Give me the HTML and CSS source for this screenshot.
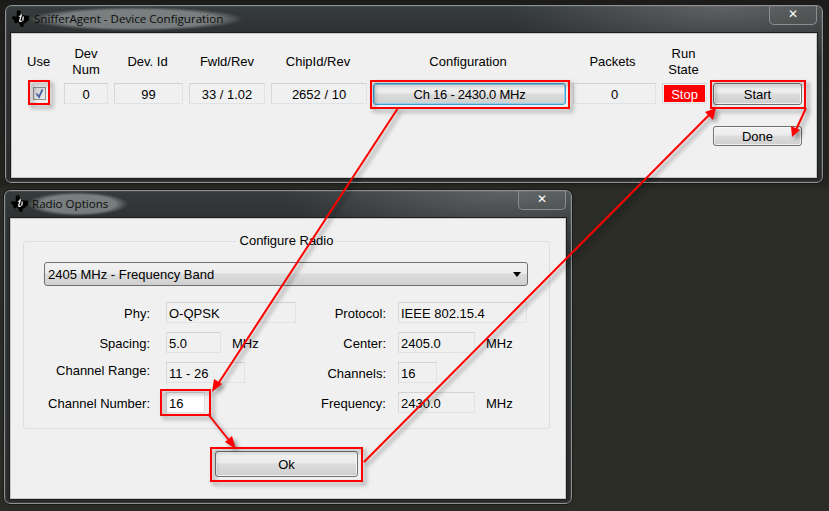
FILE: index.html
```html
<!DOCTYPE html>
<html lang="en">
<head>
<meta charset="utf-8">
<title>SnifferAgent</title>
<link rel="stylesheet" href="styles.css">
</head>
<body>
<svg width="0" height="0" class="defs">
  <symbol id="ti" viewBox="0 0 16 16">
    <path d="M4.500 .5H8V4l3.500 1.200L16 5.500V9.500l-3 2.500-2 1-.5 3-2.500-.5-1.500-3.500-1.500-.5-1 1.500-1.500-1-1-3L0 7.500V6h4.500z" fill="#000"/>
    <path d="M8.500 3.500c1 .5 1 1.500.5 2.500l-1 3c-.4 1.200.5 1.500 1.400 1l-.2 1c-1.500.8-3 .2-2.400-1.800l.9-2.800H6.300L6.500 5.500h1.200z" fill="#fff"/>
    <path d="M10 6h1.200l-.5 4H9.500z" fill="#fff"/>
  </symbol>
</svg>

<section class="win win-device">
  <header class="titlebar">
    <svg class="logo"><use href="#ti"/></svg>
    <span class="title">SnifferAgent - Device Configuration</span>
  </header>
  <button class="close">✕</button>
  <div class="client">
    <div class="device-grid">
      <div class="head">Use</div>
      <div class="head">Dev<br>Num</div>
      <div class="head head-nudge">Dev. Id</div>
      <div class="head">Fwld/Rev</div>
      <div class="head head-nudge">ChipId/Rev</div>
      <div class="head head-shift">Configuration</div>
      <div class="head head-shift">Packets</div>
      <div class="head head-nudge">Run<br>State</div>
      <div></div>

      <div class="check-cell"><span class="check"><svg width="11" height="11" viewBox="0 0 11 11"><path d="M2.500 5.500 5 9l3.500-7.500" fill="none" stroke="#4a5fa5" stroke-width="1.800"/></svg></span></div>
      <div class="field center">0</div>
      <div class="field center">99</div>
      <div class="field center">33 / 1.02</div>
      <div class="field center">2652 / 10</div>
      <button class="btn btn-focus">Ch 16 - 2430.0 MHz</button>
      <div class="field center">0</div>
      <div class="field state"><span class="stop">Stop</span></div>
      <button class="btn">Start</button>

      <button class="btn btn-done">Done</button>
    </div>
  </div>
</section>

<section class="win win-radio">
  <header class="titlebar">
    <svg class="logo"><use href="#ti"/></svg>
    <span class="title title-short">Radio Options</span>
  </header>
  <button class="close">✕</button>
  <div class="client client-radio">
    <fieldset class="group">
      <legend>Configure Radio</legend>
      <div class="combo"><span>2405 MHz - Frequency Band</span><i class="caret"></i></div>
      <div class="form">
        <div class="pane pane-left">
          <div class="row"><label>Phy:</label><div class="field w-130">O-QPSK</div></div>
          <div class="row"><label>Spacing:</label><div class="field w-55">5.0</div><span class="unit">MHz</span></div>
          <div class="row"><label class="raised">Channel Range:</label><div class="field w-79">11 - 26</div></div>
          <div class="row"><label>Channel Number:</label><div class="field field-edit w-39">16</div></div>
        </div>
        <div class="pane pane-right">
          <div class="row"><label>Protocol:</label><div class="field w-129">IEEE 802.15.4</div></div>
          <div class="row"><label>Center:</label><div class="field w-77">2405.0</div><span class="unit">MHz</span></div>
          <div class="row"><label>Channels:</label><div class="field w-39">16</div></div>
          <div class="row"><label>Frequency:</label><div class="field w-77">2430.0</div><span class="unit">MHz</span></div>
        </div>
      </div>
    </fieldset>
    <button class="btn btn-ok">Ok</button>
  </div>
</section>

<svg class="notes" width="829" height="511" viewBox="0 0 829 511" fill="none">
  <g class="note-group">
    <g stroke="#fe0000" stroke-width="2">
      <rect x="29" y="81" width="20" height="23"/>
      <rect x="371" y="81" width="198" height="27"/>
      <rect x="711" y="81" width="94" height="27"/>
      <rect x="161" y="390" width="49" height="25"/>
      <rect x="211" y="448" width="151" height="33"/>
      <path d="M398 108 216 387"/>
      <path d="M208 414 232 444"/>
      <path d="M364 462 711 113"/>
      <path d="M806 108 795 132"/>
    </g>
    <g fill="#fe0000">
      <path d="M212 392 214 379 222 384z"/>
      <path d="M236 449 225 442 232 436z"/>
      <path d="M716 108 713 120 705 112z"/>
      <path d="M792 137 791 126 800 130z"/>
    </g>
  </g>
</svg>
</body>
</html>
```
FILE: styles.css
```css
* { box-sizing: border-box; }
html, body { margin: 0; height: 100%; }
body {
  position: relative;
  width: 829px;
  height: 511px;
  overflow: hidden;
  background: #2a2b25;
  background-image: linear-gradient(180deg, #1b1b19 0, #1d1d1b 6px, #24241f 185px, #2b2c26 190px);
  font-family: "Liberation Sans", Arial, sans-serif;
  font-size: 13px;
  color: #000;
}
.defs { position: absolute; }

.win {
  position: absolute;
  border: 1px solid #8d9191;
  border-radius: 6px;
  outline: 1px solid #1a1a1a;
  background:
    radial-gradient(220px 60px at 88% 0, rgba(255,255,255,.2), transparent),
    linear-gradient(180deg, #363b3b 0, #2f3333 24px, #2a2c2c 100%);
  box-shadow: inset 0 0 0 1px rgba(255,255,255,.08);
}
.win-device { left: 5px; top: 5px; width: 818px; height: 178px; }
.win-radio { left: 4px; top: 190px; width: 568px; height: 314px; }

.titlebar {
  display: flex;
  align-items: center;
  height: 27px;
  padding: 0 0 2px 6px;
}
.logo { width: 17px; height: 17px; flex: none; }
.title {
  font-family: "Open Sans", sans-serif;
  font-size: 11.6px;
  color: #0c0c0c;
  line-height: 24px;
  padding: 0 20px 0 6px;
  margin-left: -1px;
  border-radius: 12px;
  background: radial-gradient(farthest-side, rgba(190,196,196,.5) 75%, rgba(190,196,196,0));
}
.title-short { padding-left: 5px; }
.close {
  position: absolute;
  top: -1px;
  right: 5px;
  width: 48px;
  height: 20px;
  padding: 0;
  border: 1px solid #8a8e8e;
  border-top: 0;
  border-radius: 0 0 5px 5px;
  background: rgba(255,255,255,.04);
  color: #fff;
  font-size: 12px;
  font-weight: bold;
  line-height: 19px;
  font-family: "DejaVu Sans", sans-serif;
}

.client {
  margin: 0 5px;
  height: 145px;
  background: #f0f0f0;
  border: 1px solid #c8c8c8;
  outline: 1px solid #1c1c1c;
  padding: 11px 0 0;
}
.device-grid {
  display: grid;
  grid-template-columns: 46px 44px 69px 76px 96px 194px 83px 45px 89px;
  grid-template-rows: 32px 22px 20px;
  column-gap: 6px;
  row-gap: 6px;
}
.head { display: flex; align-items: center; justify-content: center; text-align: center; line-height: 16px; color: #000; padding-top: 2px; }
.head:nth-child(1) { justify-content: flex-start; padding-left: 15px; }
.head-nudge { padding-right: 2px; }
.head-shift { padding-right: 4px; }
.check-cell { padding-left: 21px; padding-top: 4px; }
.check {
  display: flex; align-items: center; justify-content: center;
  width: 13px; height: 13px;
  border: 1px solid #8e8f8f;
  background: linear-gradient(135deg, #d0d0d0, #ececec);
}
.field {
  height: 21px;
  line-height: 21px;
  padding: 0 2px;
  background: #f0f0f0;
  border: 1px solid #e0e3e6;
  border-top-color: #d2d2d2;
  border-left-color: #d8d8d8;
  white-space: nowrap;
}
.center { text-align: center; }
.state { padding: 1px 1px; }
.stop {
  display: block; height: 17px; line-height: 19px;
  background: #fe0000; color: #fff; text-align: center;
}
.btn {
  height: 22px;
  padding: 0;
  font: inherit;
  color: #000;
  border: 1px solid #707070;
  border-radius: 3px;
  background: linear-gradient(180deg, #f2f2f2 0, #ebebeb 45%, #dcdcdc 50%, #cfcfcf 100%);
  box-shadow: inset 0 0 0 1px rgba(255,255,255,.7);
}
.btn-focus {
  width: 193px;
  letter-spacing: -.25px;
  border-color: #3c9fd0;
  box-shadow: inset 0 0 0 1px #8fd0ee;
}
.btn-done { grid-column: 9; grid-row: 3; height: 20px; margin-top: 15px; }

.client-radio { height: 281px; padding: 13px 0 0; }
.group {
  margin: 0 15px 0 12px;
  padding: 0;
  height: 197px;
  border: 1px solid #dcdfe2;
  border-radius: 3px;
  background: #f0f0f0;
}
.group legend {
  margin: 0 auto;
  padding: 0 4px;
  line-height: 18px;
}
.combo {
  display: flex;
  align-items: center;
  justify-content: space-between;
  width: 484px;
  height: 24px;
  margin: 12px 0 0 20px;
  padding: 0 6px 0 3px;
  border: 1px solid #707070;
  border-radius: 3px;
  background: linear-gradient(180deg, #f2f2f2 0, #ebebeb 45%, #dcdcdc 50%, #cfcfcf 100%);
}
.caret {
  width: 0; height: 0;
  border: 4px solid transparent;
  border-top: 5px solid #000;
  border-bottom: 0;
}
.form { display: flex; margin-top: 16px; }
.pane { display: flex; flex-direction: column; gap: 9px; }
.pane-left { width: 232px; }
.pane-left label { width: 126px; }
.pane-right { margin-left: 8px; }
.pane-right label { width: 122px; }
.pane-left .field, .pane-right .field { flex: none; }
.row { display: flex; align-items: center; height: 21px; white-space: nowrap; }
.row label { flex: none; text-align: right; padding-top: 2px; }
.row .unit { padding-top: 2px; }
.row label.raised { padding-top: 0; margin-bottom: 4px; }
.pane-left label { margin-right: 16px; }
.pane-right label { margin-right: 12px; }
.unit { margin-left: 11px; }
.w-130 { width: 130px; }
.w-129 { width: 129px; }
.w-79 { width: 79px; }
.w-77 { width: 77px; }
.w-55 { width: 55px; }
.w-39 { width: 39px; }
.field-edit { background: #fff; }
.btn-ok {
  display: block;
  width: 143px;
  height: 26px;
  margin: 22px 0 0 204px;
}

.notes { position: absolute; left: 0; top: 0; pointer-events: none; }
.note-group { filter: drop-shadow(3px 3px 2px rgba(0,0,0,.4)); }
```
